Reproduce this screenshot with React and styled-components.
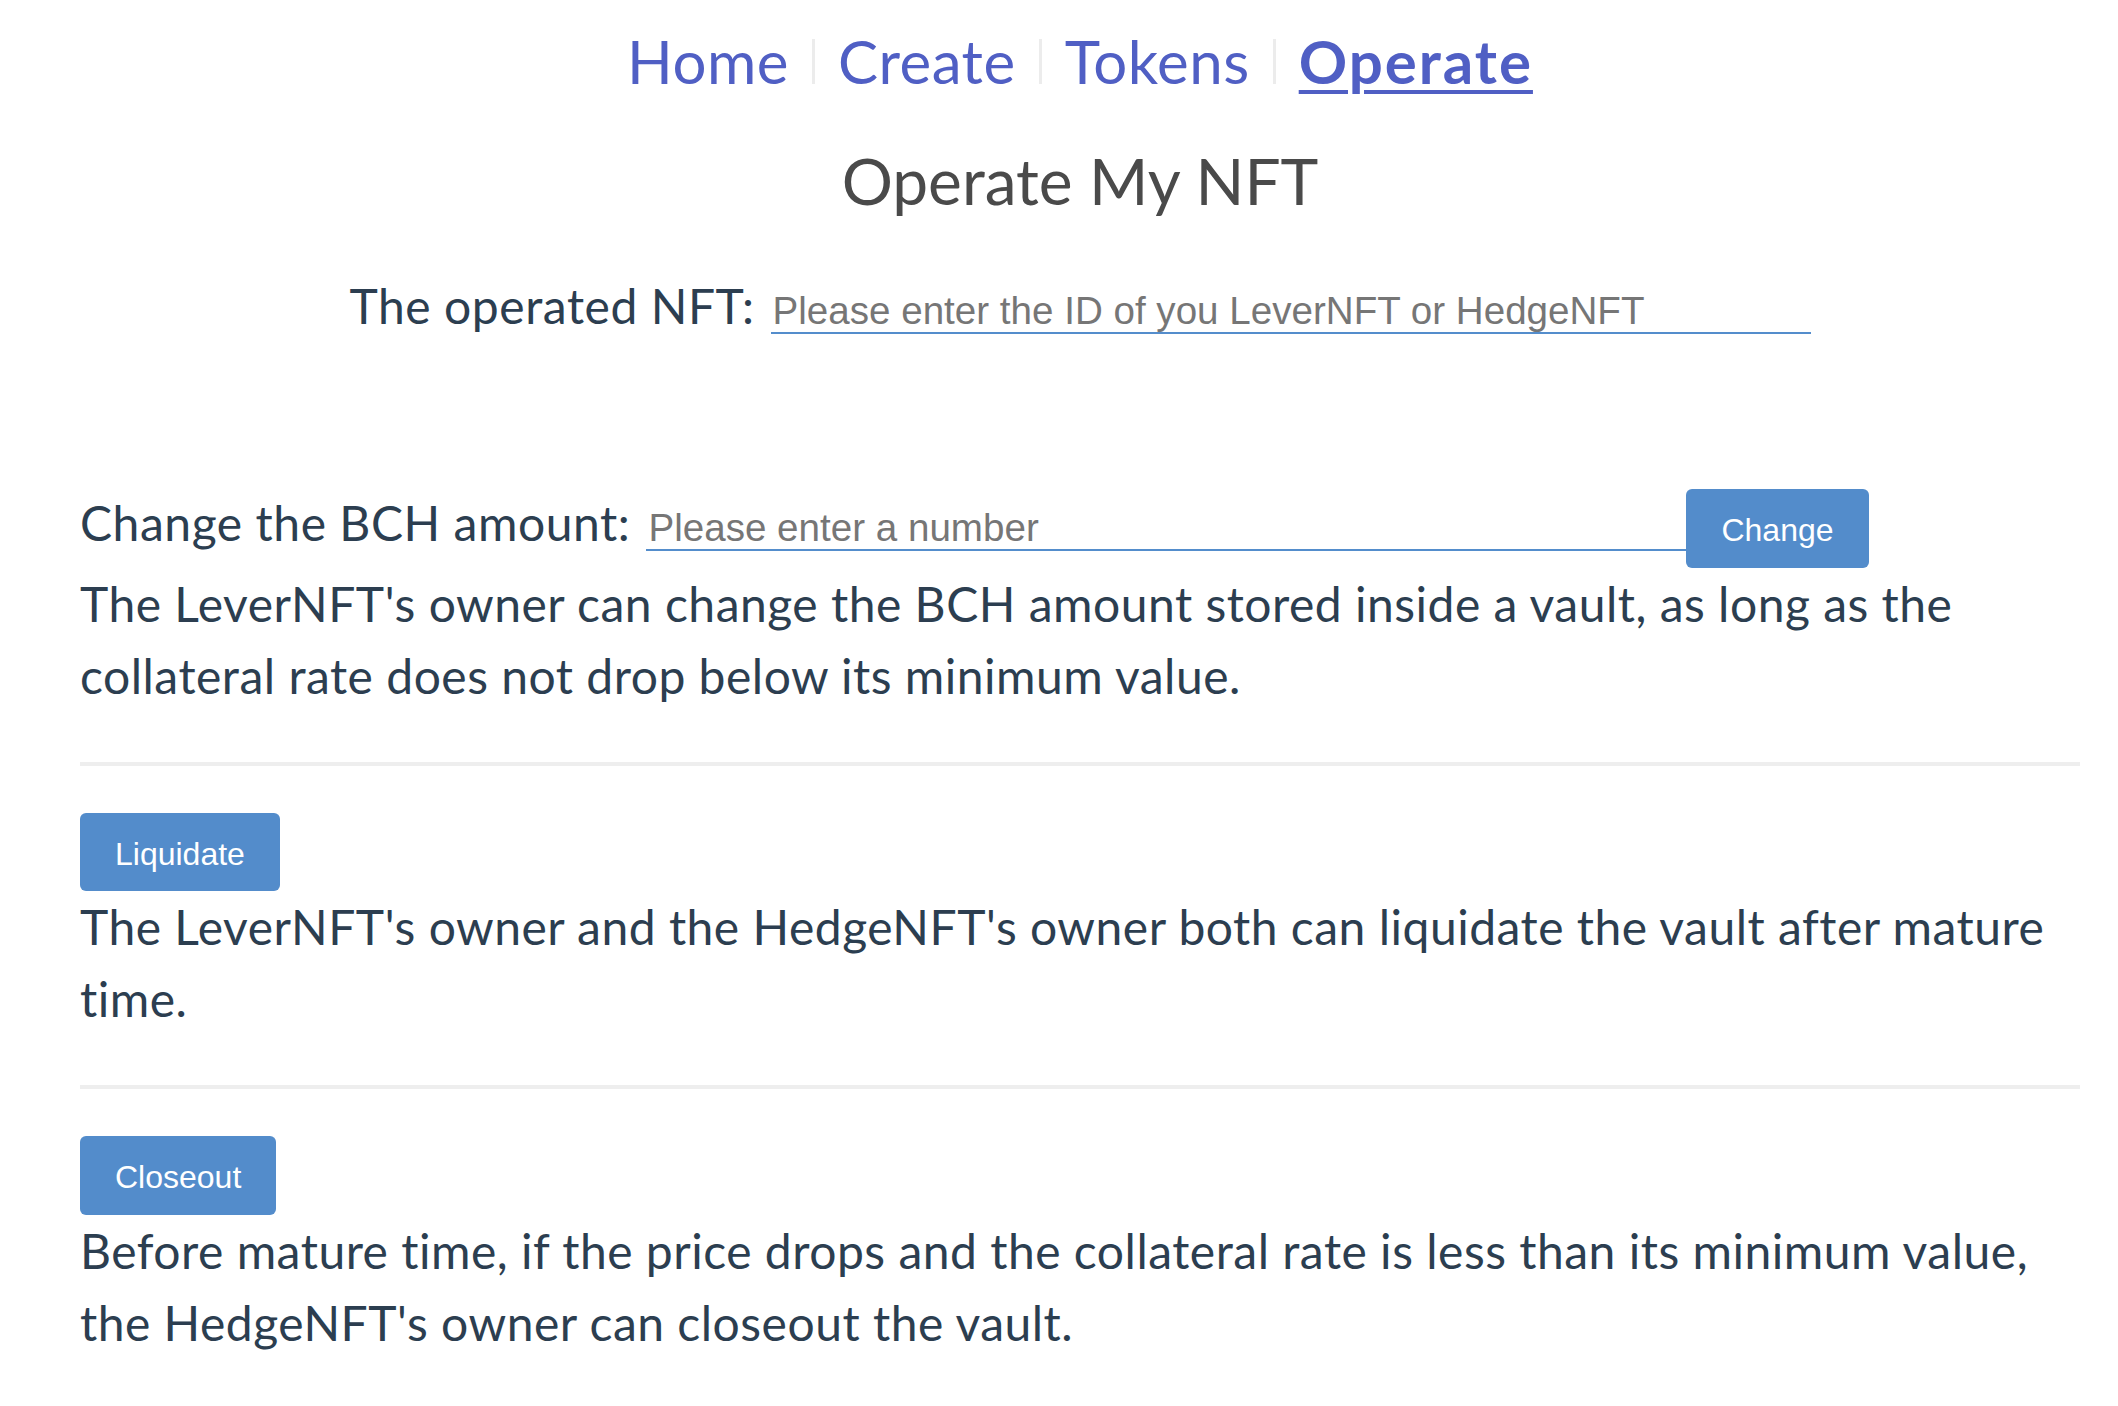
import React from 'react';
import styled, { createGlobalStyle } from 'styled-components';

const Global = createGlobalStyle`
  html, body { margin: 0; padding: 0; background: #fff; }
  body {
    font-family: Lato, "Open Sans", sans-serif;
    color: #2c3e50;
  }
  input::placeholder { color: #767676; }
`;

const Page = styled.div`
  padding: 0 38px 0 80px;
`;

const Nav = styled.nav`
  margin-top: 25px;
  text-align: center;
  font-size: 60px;
  line-height: 72px;
`;

const NavLink = styled.a`
  color: #505fc4;
  font-weight: ${p => (p.$active ? 700 : 400)};
  letter-spacing: ${p => (p.$active ? '2px' : '0.5px')};
  text-decoration: ${p => (p.$active ? 'underline' : 'none')};
  text-decoration-thickness: 4px;
  text-underline-offset: 6px;
  cursor: pointer;
`;

const Sep = styled.span`
  display: inline-block;
  width: 3px;
  height: 45px;
  margin: 0 23px;
  background: #ececec;
  vertical-align: baseline;
`;

const Title = styled.h1`
  margin: 46px 0 0;
  text-align: center;
  font-size: 64px;
  line-height: 1.2;
  font-weight: 400;
  color: #4a4a4a;
`;

const FieldRow = styled.div`
  display: flex;
  align-items: baseline;
  justify-content: ${p => (p.$centered ? 'center' : 'flex-start')};
  margin-top: ${p => p.$top || 0}px;
`;

const Label = styled.label`
  font-size: 48px;
  line-height: 72px;
  letter-spacing: 0.55px;
  margin-right: 16px;
  white-space: nowrap;
`;

const TextInput = styled.input`
  box-sizing: border-box;
  width: 1040px;
  height: 45px;
  padding: 0 2px;
  border: none;
  border-bottom: 2px solid #548dcc;
  border-radius: 0;
  outline: none;
  background: transparent;
  font-family: "Liberation Sans", Arial, sans-serif;
  font-size: 38.6px;
  color: #2c3e50;
`;

const Button = styled.button`
  display: block;
  flex: none;
  padding: 23px 35px 19px;
  border: none;
  border-radius: 6px;
  background: #538ccb;
  color: #fff;
  font-family: "Liberation Sans", Arial, sans-serif;
  font-size: 32px;
  line-height: 36.8px;
  cursor: pointer;
`;

const Description = styled.p`
  margin: 0;
  font-size: 48px;
  line-height: 72px;
  letter-spacing: 0.5px;
`;

const Divider = styled.hr`
  border: none;
  height: 4px;
  background: #eeeeee;
  margin: 50px 0 47px;
`;

export default function App() {
  return (
    <Page>
      <Global />
      <Nav>
        <NavLink>Home</NavLink>
        <Sep />
        <NavLink>Create</NavLink>
        <Sep />
        <NavLink>Tokens</NavLink>
        <Sep />
        <NavLink $active>Operate</NavLink>
      </Nav>
      <Title>Operate My NFT</Title>
      <FieldRow $centered $top={50}>
        <Label>The operated NFT:</Label>
        <TextInput placeholder="Please enter the ID of you LeverNFT or HedgeNFT" />
      </FieldRow>

      <FieldRow $top={145}>
        <Label>Change the BCH amount:</Label>
        <TextInput placeholder="Please enter a number" />
        <Button>Change</Button>
      </FieldRow>
      <Description>
        The LeverNFT's owner can change the BCH amount stored inside a vault, as long as the collateral rate does not drop below its minimum value.
      </Description>

      <Divider />
      <Button>Liquidate</Button>
      <Description>
        The LeverNFT's owner and the HedgeNFT's owner both can liquidate the vault after mature time.
      </Description>

      <Divider />
      <Button>Closeout</Button>
      <Description>
        Before mature time, if the price drops and the collateral rate is less than its minimum value, the HedgeNFT's owner can closeout the vault.
      </Description>
    </Page>
  );
}
